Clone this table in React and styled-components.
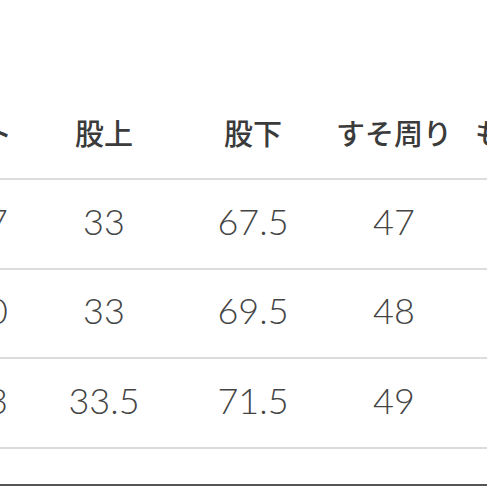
import React from "react";
import styled, { createGlobalStyle } from "styled-components";

const GlobalStyle = createGlobalStyle`
  html, body {
    margin: 0;
    padding: 0;
    background: #fff;
    overflow: hidden;
  }
`;

const columns = ["ウエスト", "股上", "股下", "すそ周り", "もも周り"];

const rows = [
  ["77", "33", "67.5", "47", "31"],
  ["80", "33", "69.5", "48", "32"],
  ["83", "33.5", "71.5", "49", "33"],
];

const Page = styled.div`
  width: 487px;
  height: 487px;
  padding-top: 90px;
  box-sizing: border-box;
  overflow: hidden;
`;

// the chart is wider than the shot, so it starts left of the frame
const Table = styled.div`
  display: grid;
  grid-template-columns: 150px 148px 150px 132px 146px;
  margin-left: -120px;
  width: max-content;
`;

const Cell = styled.div`
  display: flex;
  align-items: center;
  justify-content: ${(p) => (p.$first ? "flex-end" : "center")};
  box-sizing: border-box;
  border-bottom: 2px solid #dcdcdc;
  white-space: nowrap;
`;

const HeadCell = styled(Cell)`
  height: 90px;
  padding: 0 ${(p) => (p.$first ? "18px" : "0")} 4px 0;
  color: #3b3b3b;
  font-family: "Noto Sans CJK JP", "Noto Sans", sans-serif;
  font-size: 29px;
  font-weight: 500;
`;

const ValueCell = styled(Cell)`
  height: 89.5px;
  padding: 0 ${(p) => (p.$first ? "22px" : "0")} 6px 0;
  color: #444;
  font-family: Lato, "Noto Sans CJK JP", sans-serif;
  font-size: 36px;
  font-weight: 300;
`;

const BottomRule = styled.div`
  margin-top: 35px;
  border-top: 2px solid #555;
`;

export default function App() {
  return (
    <>
      <GlobalStyle />
      <Page>
        <Table>
          {columns.map((c, i) => (
            <HeadCell key={c} $first={i === 0}>
              {c}
            </HeadCell>
          ))}
          {rows.map((r, ri) =>
            r.map((v, i) => (
              <ValueCell key={ri + "-" + i} $first={i === 0}>
                {v}
              </ValueCell>
            ))
          )}
        </Table>
        <BottomRule />
      </Page>
    </>
  );
}
